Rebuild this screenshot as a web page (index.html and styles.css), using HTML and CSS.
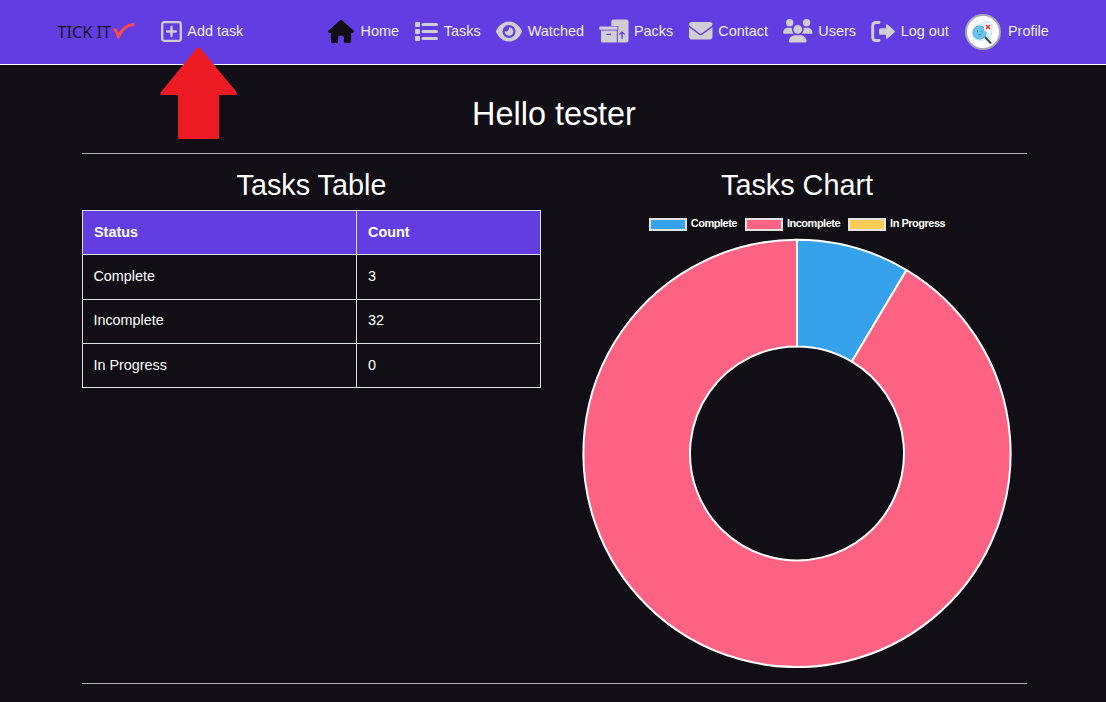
FILE: index.html
```html
<!DOCTYPE html>
<html lang="en">
<head>
<meta charset="utf-8">
<title>Tick It</title>
<link rel="stylesheet" href="styles.css">
</head>
<body>
<header class="navbar">
  <svg class="logo" width="80" height="24" viewBox="0 0 80 24">
    <text class="logo-text" x=".3" y="18" textLength="54">TICK IT</text>
    <path d="M57.700 9.500Q61 12.500 61.300 17Q66.500 5.500 76 4.500" fill="none" stroke="#ff4b50" stroke-width="3" stroke-linecap="round" stroke-linejoin="round"/>
  </svg>
  <a class="nav-link add-link">
    <svg width="21" height="21" viewBox="0 0 21 21" fill="none" stroke="currentColor" stroke-width="2.300"><rect x="1.200" y="1.200" width="18.600" height="18.600" rx="2"/><path d="M10.500 6v9M6 10.500h9" stroke-linecap="round"/></svg>
    <span>Add task</span>
  </a>
  <nav class="nav-list">
    <a class="nav-link home">
      <svg width="26" height="23" viewBox="0 0 576 512"><path fill="currentColor" d="M575.800 255.500c0 18-15 32.100-32 32.100h-32l.7 160.200c0 2.700-.2 5.400-.5 8.100V472c0 22.100-17.900 40-40 40H392c-22.100 0-40-17.900-40-40V384c0-17.700-14.300-32-32-32H256c-17.700 0-32 14.300-32 32v88c0 22.100-17.900 40-40 40H104c-22.100 0-40-17.900-40-40V287.600H32c-18 0-32-14-32-32.100c0-9 3-17 10-24L266.400 8c7-7 15-8 22-8s15 2 21 7L564.800 231.500c8 7 12 15 11 24z"/></svg>
      <span>Home</span>
    </a>
    <a class="nav-link">
      <svg width="23" height="19" viewBox="0 0 23 19" fill="currentColor"><rect width="5" height="5" rx="1"/><rect y="7" width="5" height="5" rx="1"/><rect y="14" width="5" height="5" rx="1"/><rect x="6.500" y="1" width="16.500" height="3" rx="1.500"/><rect x="6.500" y="8" width="16.500" height="3" rx="1.500"/><rect x="6.500" y="15" width="16.500" height="3" rx="1.500"/></svg>
      <span>Tasks</span>
    </a>
    <a class="nav-link">
      <svg width="26" height="21" viewBox="0 32 576 448"><path fill="currentColor" d="M288 32c-80.800 0-145.500 36.800-192.600 80.600C48.600 156 17.300 208 2.500 243.700c-3.300 7.900-3.300 16.700 0 24.600C17.300 304 48.600 356 95.400 399.400C142.500 443.200 207.200 480 288 480s145.500-36.800 192.600-80.600c46.800-43.500 78.100-95.400 93-131.100c3.300-7.900 3.300-16.700 0-24.600c-14.900-35.700-46.200-87.700-93-131.100C433.500 68.800 368.800 32 288 32zM144 256a144 144 0 1 1 288 0 144 144 0 1 1 -288 0zm144-64c0 35.300-28.700 64-64 64c-7.100 0-13.900-1.200-20.300-3.300c-5.500-1.800-11.900 1.600-11.700 7.400c.3 6.900 1.300 13.800 3.200 20.700c13.700 51.200 66.400 81.600 117.600 67.900s81.600-66.400 67.900-117.600c-11.100-41.500-47.800-69.400-88.600-71.100c-5.800-.2-9.200 6.100-7.400 11.700c2.100 6.400 3.300 13.200 3.300 20.300z"/></svg>
      <span>Watched</span>
    </a>
    <a class="nav-link packs-link">
      <svg width="30" height="24" viewBox="0 0 30 24"><g fill="currentColor"><path d="M12.300 7V3Q12.300 .5 14.800 .5H27Q29.500 .5 29.500 3V21Q29.500 23.500 27 23.500H18.800V11.300H19.300V7z"/><rect x=".3" y="7.500" width="18.200" height="3.200"/><path d="M2 11.500H17.800V23.500H3Q2 23.500 2 22.500z"/></g><path class="cut" d="M7.500 15.300h4.500M23 20v-7M20.200 15.600L23 12.800L25.800 15.600"/></svg>
      <span>Packs</span>
    </a>
    <a class="nav-link">
      <svg width="23.500" height="17.600" viewBox="0 64 512 384"><path fill="currentColor" d="M48 64C21.500 64 0 85.500 0 112c0 15.100 7.100 29.300 19.200 38.400L236.800 313.600c11.400 8.500 27 8.500 38.400 0L492.800 150.400c12.100-9.100 19.200-23.300 19.200-38.400c0-26.500-21.500-48-48-48H48zM0 176V384c0 35.300 28.700 64 64 64H448c35.300 0 64-28.700 64-64V176L294.400 339.200c-22.800 17.100-54 17.100-76.800 0L0 176z"/></svg>
      <span>Contact</span>
    </a>
    <a class="nav-link">
      <svg width="29.500" height="23.500" viewBox="0 0 640 512"><path fill="currentColor" d="M144 0a80 80 0 1 1 0 160A80 80 0 1 1 144 0zM512 0a80 80 0 1 1 0 160A80 80 0 1 1 512 0zM0 298.700C0 239.800 47.800 192 106.700 192h42.700c15.900 0 31 3.500 44.600 9.700c-1.300 7.200-1.900 14.700-1.900 22.300c0 38.200 16.800 72.500 43.300 96H21.300C9.600 320 0 310.400 0 298.700zM405.300 320c26.600-23.500 43.300-57.800 43.300-96c0-7.600-.7-15-1.900-22.300c13.600-6.300 28.700-9.700 44.600-9.700h42.700C592.200 192 640 239.800 640 298.700c0 11.800-9.600 21.300-21.300 21.300H405.300zM224 224a96 96 0 1 1 192 0 96 96 0 1 1 -192 0zM128 485.300C128 411.700 187.700 352 261.300 352H378.700C452.300 352 512 411.700 512 485.300c0 14.700-11.900 26.700-26.700 26.700H154.700c-14.700 0-26.700-11.900-26.700-26.700z"/></svg>
      <span>Users</span>
    </a>
    <a class="nav-link">
      <svg width="24" height="21" viewBox="0 0 24 21"><path d="M8 1.500H5Q1.700 1.500 1.700 4.800V16.200Q1.700 19.500 5 19.500H8" fill="none" stroke="currentColor" stroke-width="2.900" stroke-linecap="round"/><path fill="currentColor" d="M9.500 7.200H15V4.300Q15.200 2.600 16.600 3.400L23.500 9.700Q24.200 10.500 23.500 11.300L16.600 17.600Q15.200 18.400 15 16.700V13.800H9.500Q8 13.800 8 12.300V8.700Q8 7.200 9.500 7.200z"/></svg>
      <span>Log out</span>
    </a>
    <a class="nav-link profile">
      <svg width="36" height="36" viewBox="0 0 36 36"><circle cx="18" cy="18" r="17" fill="#fff" stroke="#aaa6b4" stroke-width="2"/><path d="M8 17Q9 9 16 9Q20 5 25 7Q30 10 27 17Q28 24 22 26Q13 29 9 24Q6 21 8 17" fill="#d5effb"/><path d="M20 23L26 29.500" stroke="#3d4a5c" stroke-width="2"/><circle cx="14.500" cy="18.500" r="6.500" fill="#70c5f1" stroke="#55a9dd"/><path d="M12.500 16.500v2M17 16.500v2M13.500 21Q15 20 16.500 21" fill="none" stroke="#347eae" stroke-width=".9"/><rect x="19" y="9" width="8" height="8.500" rx="2" fill="#fbf3f5"/><path d="M21 11L25 15M25 11L21 15" stroke="#dd3240" stroke-width="1.500"/><path d="M12 7h1M8 26h1M26 20h1" stroke="#82c9ec"/></svg>
      <span>Profile</span>
    </a>
  </nav>
</header>
<svg class="pointer" width="78" height="93" viewBox="0 0 78 93"><path d="M36.500 1.500Q38.500-.5 40.500 1.500L76.500 45Q78 48 75 48H59V90.500Q59 92 57.500 92H19.500Q18 92 18 90.500V48H2Q-1 48 1 45z" fill="#ed1c24"/></svg>
<main class="page">
  <h1 class="greeting">Hello tester</h1>
  <div class="columns">
    <section class="table-panel">
      <h2 class="heading">Tasks Table</h2>
      <table class="tasks">
        <thead><tr><th class="status-col">Status</th><th>Count</th></tr></thead>
        <tbody>
          <tr class="tall"><td>Complete</td><td>3</td></tr>
          <tr class="middle"><td>Incomplete</td><td>32</td></tr>
          <tr><td>In Progress</td><td>0</td></tr>
        </tbody>
      </table>
    </section>
    <section class="chart-panel">
      <h2 class="heading">Tasks Chart</h2>
      <div class="legend">
        <span class="entry"><i class="swatch blue"></i><span class="label">Complete</span></span>
        <span class="entry"><i class="swatch pink"></i><span class="label">Incomplete</span></span>
        <span class="entry"><i class="swatch yellow"></i><span class="label">In Progress</span></span>
      </div>
      <svg class="donut" width="430" height="430" viewBox="-215 -215.400 430 430" stroke="#fff" stroke-width="2" stroke-linejoin="round">
        <path fill="#36a2eb" d="M0-213.600A213.600 213.600 0 0 1 109.550-183.370L54.880-91.860A107 107 0 0 0 0-107z"/>
        <path fill="#ff6384" d="M109.550-183.370A213.600 213.600 0 1 1 0-213.600V-107A107 107 0 1 0 54.880-91.860z"/>
      </svg>
    </section>
  </div>
</main>
</body>
</html>
```
FILE: styles.css
```css
* { box-sizing: border-box; }
body { margin: 0; height: 702px; overflow: hidden; background: #110e15; color: #fff; font: 14.4px/22px "Liberation Sans", Arial, sans-serif; }
.navbar { display: flex; align-items: center; height: 65px; padding: 0 0 2px 57px; background: #623ee2; border-bottom: 1px solid #fff; }
.logo { display: block; width: 80px; margin: 1px 23.5px 0 0; }
.logo-text { font: 16.5px "Noto Sans", sans-serif; fill: #171326; }
.nav-link { display: flex; align-items: center; gap: 5.8px; white-space: nowrap; color: #d0cdd5; }
.nav-link svg { display: block; flex: none; }
.nav-link span { color: #f1edfc; }
.add-link { width: 167.5px; }
.nav-list { display: grid; grid-template-columns: 87px 81px 103px 90px 94px 88px 94px auto; align-items: center; }
.home { color: #110e15; gap: 6.5px; }
.packs-link { gap: 5px; }
.cut { fill: none; stroke: #623ee2; stroke-width: 1.3; }
.profile { gap: 7px; }
.profile svg { margin: 1px 0 -1px; }
.pointer { position: absolute; left: 160px; top: 47px; }
.page { width: 945px; height: 619px; margin-left: 82px; border-bottom: 1px solid #b0aeb4; }
.greeting { height: 89px; margin: 0; padding: 30px 1px 0 0; border-bottom: 1px solid #b0aeb4; font-size: 32.4px; line-height: 39px; font-weight: 400; text-align: center; }
.columns { display: flex; justify-content: space-between; padding-right: 15px; }
.heading { margin: 0; padding-top: 14px; height: 56px; font-size: 28.8px; line-height: 35px; font-weight: 400; text-align: center; }
.table-panel { width: 459px; }
.chart-panel { width: 430px; }
.tasks { width: 459px; table-layout: fixed; border-collapse: collapse; text-align: left; }
.tasks tr { height: 44px; }
.tasks .tall { height: 45px; }
.tasks th, .tasks td { padding: 0 11px 2px; border: 1px solid #dee2e6; }
.tasks td:first-child { padding-left: 10.4px; }
.tasks .middle td { padding-bottom: 4px; }
.tasks th { background: #623ee2; }
.tasks .status-col { width: 274px; }
.legend { display: flex; justify-content: center; gap: 8px; height: 28px; padding-top: 7px; }
.entry { display: flex; align-items: flex-start; gap: 4px; font-size: 11px; line-height: 13px; font-weight: 700; letter-spacing: -.49px; }
.swatch { width: 38px; height: 13px; margin-top: 1px; border: 2px solid #e3e3e6; }
.blue { background: #36a2eb; }
.pink { background: #ff6384; }
.yellow { background: #ffcd56; }
.donut { display: block; }
```
